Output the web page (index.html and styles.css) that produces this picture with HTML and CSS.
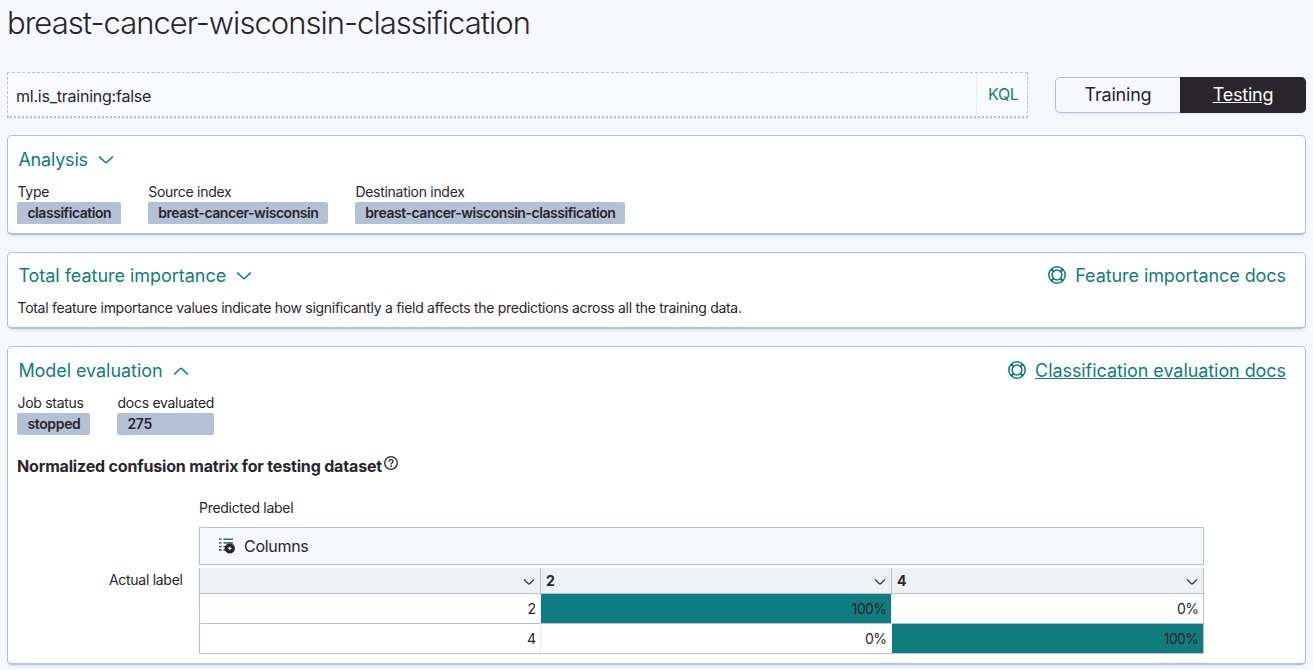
FILE: index.html
```
<!DOCTYPE html>
<html lang="en">
<head>
<meta charset="utf-8">
<title>breast-cancer-wisconsin-classification</title>
<link rel="stylesheet" href="styles.css">
</head>
<body>
<svg class="defs" width="0" height="0" aria-hidden="true">
  <symbol id="chevron" viewBox="0 0 16 16"><path d="M1.2 4.6 7.2 10.3a1.15 1.15 0 0 0 1.6 0L14.8 4.6" fill="none" stroke="currentColor" stroke-width="1.5"/></symbol>
  <symbol id="help" viewBox="0 0 18 18"><g fill="none" stroke="currentColor"><circle cx="9" cy="9" r="8.2" stroke-width="1.5"/><circle cx="9" cy="9" r="4.9" stroke-width="1.5"/><path d="M3.6 2.6 6 5.6M2.6 3.6 5.6 6M14.4 2.6 12 5.6M15.4 3.6 12.4 6M3.6 15.4 6 12.4M2.6 14.4 5.6 12M14.4 15.4 12 12.4M15.4 14.4 12.4 12" stroke-width="1.3"/></g></symbol>
</svg>
<main class="page">
  <h1 class="title">breast-cancer-wisconsin-classification</h1>
  <div class="controls">
    <div class="search"><div class="search-input">ml.is_training:false</div><div class="kql">KQL</div></div>
    <div class="toggle"><div class="toggle-btn">Training</div><div class="toggle-btn selected">Testing</div></div>
  </div>

  <section class="panel analysis">
    <div class="head"><h2 class="head-title">Analysis</h2><svg class="chev"><use href="#chevron"/></svg></div>
    <div class="stats">
      <div class="stat"><span class="label">Type</span><div class="badge">classification</div></div>
      <div class="stat"><span class="label">Source index</span><div class="badge">breast-cancer-wisconsin</div></div>
      <div class="stat"><span class="label">Destination index</span><div class="badge">breast-cancer-wisconsin-classification</div></div>
    </div>
  </section>

  <section class="panel importance">
    <div class="head"><h2 class="head-title">Total feature importance</h2><svg class="chev"><use href="#chevron"/></svg>
      <a class="docs"><svg class="help"><use href="#help"/></svg><span>Feature importance docs</span></a></div>
    <p class="desc">Total feature importance values indicate how significantly a field affects the predictions across all the training data.</p>
  </section>

  <section class="panel evaluation">
    <div class="head"><h2 class="head-title">Model evaluation</h2><svg class="chev up"><use href="#chevron"/></svg>
      <a class="docs"><svg class="help"><use href="#help"/></svg><span class="underlined">Classification evaluation docs</span></a></div>
    <div class="stats">
      <div class="stat"><span class="label">Job status</span><div class="badge">stopped</div></div>
      <div class="stat"><span class="label">docs evaluated</span><div class="badge">275</div></div>
    </div>
    <h3 class="matrix-title"><span>Normalized confusion matrix for testing dataset</span>
      <svg class="info" viewBox="0 0 14 14"><circle cx="7" cy="7" r="6.3" fill="none" stroke="currentColor" stroke-width="1.3"/><path d="M5 5.7C5 4.3 5.8 3.6 7 3.6s2 .8 2 1.8C9 6.9 7.1 6.8 7.1 8.5" fill="none" stroke="currentColor" stroke-width="1.3"/><circle cx="7.1" cy="10.2" r=".85" fill="currentColor"/></svg></h3>
    <div class="matrix">
      <div class="actual">Actual label</div>
      <div class="grid-wrap">
        <div class="predicted">Predicted label</div>
        <div class="toolbar">
          <svg class="cols" viewBox="0 0 16 16"><path d="M0 4.8h2.6M0 8.6h2.6M0 12h2.6M4.5 4.8h9.5M4.5 8.6h4M4.5 12h2" stroke="#2b394f" stroke-width="1.3" fill="none"/><path d="M0 1.2h2.6M4.5 1.2h9.5" stroke="#117c80" stroke-width="1.6"/><circle cx="10.8" cy="10.4" r="5.2" fill="#29252c"/><path d="M10.8 8.8v3.2M9.2 10.4h3.2" stroke="#fff" stroke-width="1.1"/></svg>
          <span>Columns</span></div>
        <div class="grid">
          <div class="cell th"><svg class="chev small"><use href="#chevron"/></svg></div>
          <div class="cell th"><span>2</span><svg class="chev small"><use href="#chevron"/></svg></div>
          <div class="cell th"><span>4</span><svg class="chev small"><use href="#chevron"/></svg></div>
          <div class="cell">2</div><div class="cell full">100%</div><div class="cell">0%</div>
          <div class="cell">4</div><div class="cell">0%</div><div class="cell full">100%</div>
        </div>
      </div>
    </div>
  </section>
</main>
</body>
</html>
```
FILE: styles.css
```
*{box-sizing:border-box}
body{margin:0;background:#f7f8fc;color:#29252c;font:14px/21px Inter,"Liberation Sans",sans-serif;letter-spacing:-.29px;height:670px;overflow:hidden}
h1,h2,h3,p{margin:0;font-weight:400}
.defs{display:none}
.page{padding:0 7px}
.title{font-size:31px;line-height:46px;font-weight:300;letter-spacing:-.97px;height:72px}
.controls{display:flex;justify-content:space-between;height:63px}
.search{display:flex;width:1021px;height:46px;border:1px dashed #b4c0d5;border-bottom:2px dotted #b4c0d5;background:#fafbfe;box-shadow:0 1px 1px #e9edf3}
.search-input{flex:1;padding:13px 8px;font-size:16px;letter-spacing:-.23px}
.kql{width:51px;border-left:1px solid #e9edf3;color:#117c80;font-size:16px;padding:11px 0 0 11px}
.toggle{display:grid;grid-template-columns:124px 126px;width:251px;height:36px;margin-top:5px;border-radius:5px;border:1px solid #b4c0d5;font-size:18px;letter-spacing:-.2px;line-height:34px;text-align:center;box-shadow:0 1px 2px #dfe5ee}
.selected{background:#29252c;color:#fff;text-decoration:underline;margin:-1px 0;border-radius:0 5px 5px 0;line-height:36px}
.panel{background:#fff;border:1px solid #b4c0d5;border-bottom-width:2px;border-radius:5px;padding:0 19px 0 9px;box-shadow:0 2px 3px #e5ebf1}
.analysis{height:100px;margin-bottom:17px}
.importance{height:77px;margin-bottom:17px}
.evaluation{height:319px}
.head{display:flex;align-items:center;height:47px;color:#117c80;font-size:18px;letter-spacing:-.06px;padding-left:1.4px}
.analysis .head{letter-spacing:-.2px}
.importance .head{height:45px;letter-spacing:-.03px}
.head-title{font-size:18px}
.chev{width:16px;height:16px;margin-left:10px}
.up{transform:scaleY(-1)}
.docs{display:flex;align-items:center;margin-left:auto;gap:9px;letter-spacing:-.07px}
.help{width:18px;height:18px;margin-top:-1px}
.underlined{text-decoration:underline}
.desc{padding-left:.5px;margin-top:-1px}
.stats{display:flex;gap:27px}
.label{display:block;height:19px;line-height:17px;padding-left:.5px}
.badge{background:#b4c0d5;height:22px;line-height:22px;border-radius:2px;padding:0 9.6px 0 10.4px;font-weight:600;letter-spacing:-.45px}
.evaluation .badge{letter-spacing:-.35px}
.matrix-title{display:flex;font-weight:700;font-size:16px;letter-spacing:-.17px;margin-top:21px}
.info{width:14px;height:14px;margin:0 0 0 2px}
.matrix{display:flex}
.actual{width:182px;padding:92px 0 0 92px}
.grid-wrap{width:1005px}
.predicted{padding-top:20px;height:50px}
.toolbar{display:flex;align-items:center;height:38px;border:1px solid #b4c0d5;background:#f7f8fc;padding-left:19px;gap:9px;font-size:16px}
.cols{width:16px;height:16px}
.grid{display:grid;grid-template-columns:341px 351px 312px;grid-template-rows:26px 30px 30px;margin-top:3px;border-left:1px solid #b4c0d5}
.cell{display:flex;align-items:center;justify-content:flex-end;border-bottom:1px solid #b4c0d5;border-right:1px solid #e9edf3;padding-right:4.5px;letter-spacing:-.6px}
.cell:nth-child(3n){border-right-color:#b4c0d5}
.th{background:#edf1f4;border-right-color:#b4c0d5;padding:0 5px;font-weight:700}
.th .chev{margin:2px 0 0 auto}
.small{width:12px;height:12px}
.full{background:#117c80}
```
